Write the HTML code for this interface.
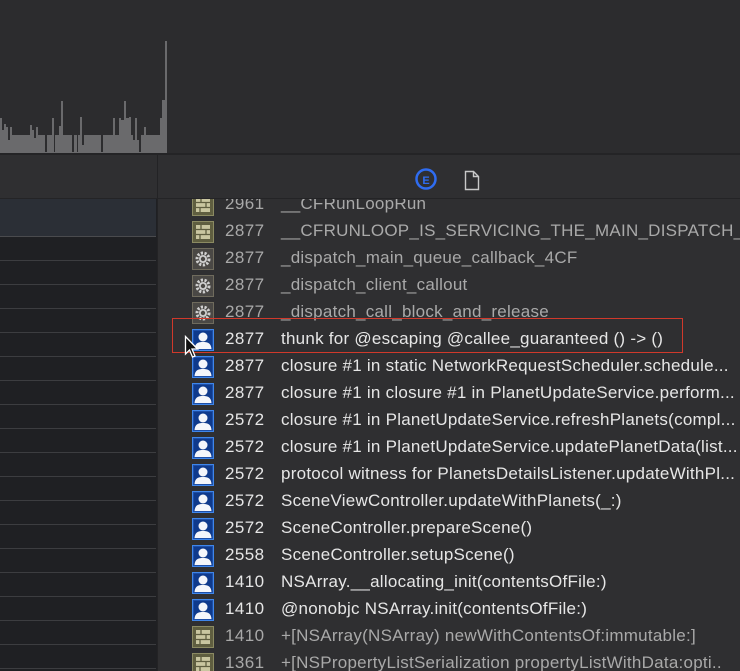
<!DOCTYPE html>
<html><head><meta charset="utf-8"><style>
*{margin:0;padding:0;box-sizing:border-box}
body{width:740px;height:671px;overflow:hidden;background:#2e2e30;font-family:"Liberation Sans",sans-serif;position:relative}
.top{position:absolute;left:0;top:0;width:740px;height:153px;background:#2c2c2e}
.sep{position:absolute;left:0;top:153px;width:740px;height:2px;background:#242426}
.hdr{position:absolute;left:0;top:155px;width:740px;height:44px;background:#2f2f31;border-bottom:1px solid #242426}
.vdiv{position:absolute;left:157px;top:155px;width:1px;height:516px;background:#232325}
.left{position:absolute;left:0;top:199px;width:157px;height:472px;background:#1f2023}
.lsel{position:absolute;left:0;top:199px;width:156px;height:37px;background:#2b2f36}
.ll{position:absolute;left:0;width:156px;height:1px;background:#3c3d40}
.right{position:absolute;left:158px;top:199px;width:582px;height:472px;background:#2f2f31;overflow:hidden}
.row{position:absolute;left:0;height:27px;width:582px}
.ic{position:absolute;left:34px;top:2px;width:22px;height:22px}
.n{position:absolute;left:67px;top:2px;font-size:17px;color:#e6e6e6;letter-spacing:0.4px}
.t{position:absolute;left:123px;top:2px;font-size:17px;color:#e6e6e6;white-space:nowrap;letter-spacing:0.25px}
.sys .n,.sys .t{color:#a9a9a9}
.box{position:absolute;left:172px;top:318px;width:511px;height:35px;border:1.5px solid #d0392b}
</style></head><body>
<div class="top">
<svg width="740" height="153" style="position:absolute;left:0;top:0">
<polygon fill="#6a6a6c" points="0,153 0,118 2,118 2,130 4,130 4,124 6,124 6,127 8,127 8,140 10,140 10,127 12,127 12,135 30,135 30,125 32,125 32,130 34,130 34,138 36,138 36,127 38,127 38,135 45,135 45,152 47,152 47,135 52,135 52,118 54,118 54,152 55,152 55,135 59,135 59,126 61,126 61,101 63,101 63,135 72,135 72,152 74,152 74,135 77,135 77,152 78,152 78,135 80,135 80,117 82,117 82,145 84,145 84,135 101,135 101,152 103,152 103,135 113,135 113,118 115,118 115,135 119,135 119,118 121,118 121,120 124,120 124,101 126,101 126,118 129,118 129,117 131,117 131,135 133,135 133,140 135,140 135,118 137,118 137,140 139,140 139,152 141,152 141,135 144,135 144,127 146,127 146,135 150,135 150,135 160,135 160,118 162,118 162,100 165,100 165,41 167,41 167,153"/>
</svg>
</div>
<div class="sep"></div>
<div class="hdr">
<svg width="740" height="44" style="position:absolute;left:0;top:0">
<circle cx="426" cy="24" r="9.5" fill="none" stroke="#2f6cf0" stroke-width="2.5"/>
<text x="426" y="29" font-size="11" fill="#2f6cf0" text-anchor="middle" font-family="Liberation Sans" font-weight="bold">E</text>
<path d="M465.5,16.5 h8 l5,5 v13 h-13 z M473.5,16.5 v5 h5" fill="none" stroke="#c8c8c8" stroke-width="1.4"/>
</svg>
</div>
<div class="left"></div>
<div class="lsel"></div>
<div class="ll" style="top:236px;background:#4a4b4e"></div>
<div class="ll" style="top:260px"></div><div class="ll" style="top:284px"></div><div class="ll" style="top:308px"></div><div class="ll" style="top:332px"></div><div class="ll" style="top:356px"></div><div class="ll" style="top:380px"></div><div class="ll" style="top:404px"></div><div class="ll" style="top:428px"></div><div class="ll" style="top:452px"></div><div class="ll" style="top:476px"></div><div class="ll" style="top:500px"></div><div class="ll" style="top:524px"></div><div class="ll" style="top:548px"></div><div class="ll" style="top:572px"></div><div class="ll" style="top:596px"></div><div class="ll" style="top:620px"></div><div class="ll" style="top:644px"></div><div class="ll" style="top:668px"></div>
<div class="vdiv"></div>
<svg width="0" height="0" style="position:absolute">
<defs>
<g id="lib"><rect x="0.5" y="0.5" width="21" height="21" fill="#5f5e40" stroke="#8b8a62"/><rect x="4" y="4" width="14" height="14" fill="#c9c6a0"/><path d="M4,8.5h14M4,13.5h14M9,4v4.5M14,8.5v5M8,13.5v4.5" stroke="#5f5e40" stroke-width="1.3"/></g>
<g id="gear"><rect x="0.5" y="0.5" width="21" height="21" fill="#4a4845" stroke="#6f6b5d"/><circle cx="11" cy="11" r="6" fill="none" stroke="#cfcfcf" stroke-width="3" stroke-dasharray="2.2 1.5"/><circle cx="11" cy="11" r="4" fill="#cfcfcf"/><circle cx="11" cy="11" r="2.2" fill="#4a4845"/></g>
<g id="usr"><rect x="0.5" y="0.5" width="21" height="21" fill="#1d4fa8" stroke="#3f86ea"/><rect x="2" y="2" width="18" height="18" fill="#0f3a8c"/><circle cx="11" cy="8" r="4.5" fill="#f4f6fb"/><path d="M2.5,20 C3,14 6.5,13 11,13 C15.5,13 19,14 19.5,20 Z" fill="#f4f6fb"/></g>
</defs></svg>
<div class="right">
<div class="row sys" style="top:-7px"><svg class="ic"><use href="#lib"/></svg><div class="n">2961</div><div class="t">__CFRunLoopRun</div></div>
<div class="row sys" style="top:20px"><svg class="ic"><use href="#lib"/></svg><div class="n">2877</div><div class="t">__CFRUNLOOP_IS_SERVICING_THE_MAIN_DISPATCH_QU..</div></div>
<div class="row sys" style="top:47px"><svg class="ic"><use href="#gear"/></svg><div class="n">2877</div><div class="t">_dispatch_main_queue_callback_4CF</div></div>
<div class="row sys" style="top:74px"><svg class="ic"><use href="#gear"/></svg><div class="n">2877</div><div class="t">_dispatch_client_callout</div></div>
<div class="row sys" style="top:101px"><svg class="ic"><use href="#gear"/></svg><div class="n">2877</div><div class="t">_dispatch_call_block_and_release</div></div>
<div class="row" style="top:128px"><svg class="ic"><use href="#usr"/></svg><div class="n">2877</div><div class="t">thunk for @escaping @callee_guaranteed () -&gt; ()</div></div>
<div class="row" style="top:155px"><svg class="ic"><use href="#usr"/></svg><div class="n">2877</div><div class="t">closure #1 in static NetworkRequestScheduler.schedule...</div></div>
<div class="row" style="top:182px"><svg class="ic"><use href="#usr"/></svg><div class="n">2877</div><div class="t">closure #1 in closure #1 in PlanetUpdateService.perform...</div></div>
<div class="row" style="top:209px"><svg class="ic"><use href="#usr"/></svg><div class="n">2572</div><div class="t">closure #1 in PlanetUpdateService.refreshPlanets(compl...</div></div>
<div class="row" style="top:236px"><svg class="ic"><use href="#usr"/></svg><div class="n">2572</div><div class="t">closure #1 in PlanetUpdateService.updatePlanetData(list...</div></div>
<div class="row" style="top:263px"><svg class="ic"><use href="#usr"/></svg><div class="n">2572</div><div class="t">protocol witness for PlanetsDetailsListener.updateWithPl...</div></div>
<div class="row" style="top:290px"><svg class="ic"><use href="#usr"/></svg><div class="n">2572</div><div class="t">SceneViewController.updateWithPlanets(_:)</div></div>
<div class="row" style="top:317px"><svg class="ic"><use href="#usr"/></svg><div class="n">2572</div><div class="t">SceneController.prepareScene()</div></div>
<div class="row" style="top:344px"><svg class="ic"><use href="#usr"/></svg><div class="n">2558</div><div class="t">SceneController.setupScene()</div></div>
<div class="row" style="top:371px"><svg class="ic"><use href="#usr"/></svg><div class="n">1410</div><div class="t">NSArray.__allocating_init(contentsOfFile:)</div></div>
<div class="row" style="top:398px"><svg class="ic"><use href="#usr"/></svg><div class="n">1410</div><div class="t">@nonobjc NSArray.init(contentsOfFile:)</div></div>
<div class="row sys" style="top:425px"><svg class="ic"><use href="#lib"/></svg><div class="n">1410</div><div class="t">+[NSArray(NSArray) newWithContentsOf:immutable:]</div></div>
<div class="row sys" style="top:452px"><svg class="ic"><use href="#lib"/></svg><div class="n">1361</div><div class="t">+[NSPropertyListSerialization propertyListWithData:opti..</div></div>
</div>
<div class="box"></div>
<svg width="20" height="26" style="position:absolute;left:184px;top:335px"><path d="M1.5,1.5 L1.5,19 L5.5,15 L8.5,22 L11,21 L8,14 L13.5,14 Z" fill="#111" stroke="#fff" stroke-width="1.3"/></svg>
</body></html>
